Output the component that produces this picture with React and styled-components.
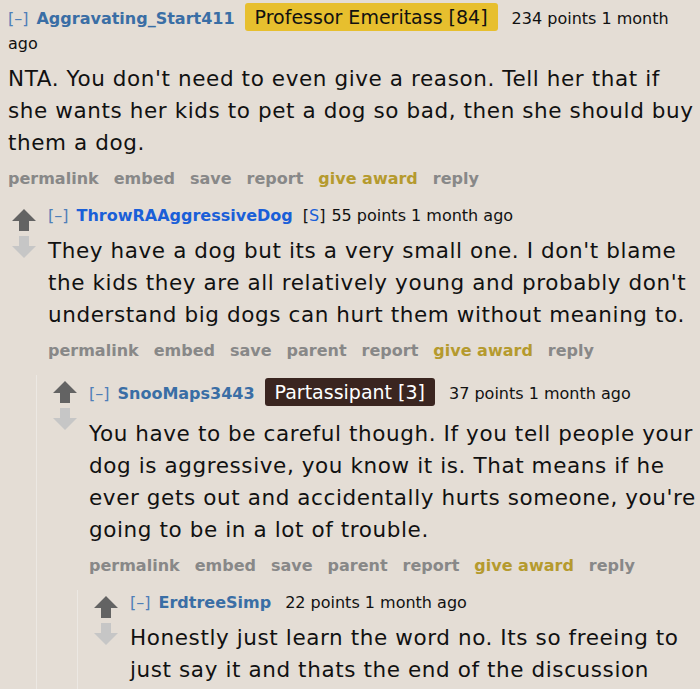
import React from "react";
import styled, { createGlobalStyle } from "styled-components";

const GlobalStyle = createGlobalStyle`
  html, body {
    margin: 0;
    padding: 0;
    background: #e4ddd5;
    overflow: hidden;
  }
`;

const Page = styled.div`
  width: 700px;
  height: 689px;
  overflow: hidden;
  box-sizing: border-box;
  padding: 5px 0 0 8px;
  background: #e4ddd5;
  font-family: "DejaVu Sans", Verdana, sans-serif;
  color: #111;
`;

const Thing = styled.div`
  margin-top: ${(p) => (p.$first ? "0" : "12px")};
`;

const Row = styled.div`
  display: flex;
  align-items: flex-start;
`;

const Midcol = styled.div`
  width: 36px;
  flex: none;
  display: flex;
  flex-direction: column;
  gap: 5px;
  padding-top: 6px;
`;

const Entry = styled.div`
  flex: 1;
  min-width: 0;
`;

const Tagline = styled.div`
  font-size: 16px;
  line-height: 25px;
  color: #111;
  padding: ${(p) => (p.$tall ? "5px 0 5px" : "0")};
`;

const Expand = styled.span`
  color: #4f7fb8;
  margin-right: 8px;
`;

const Author = styled.span`
  font-weight: bold;
  color: ${(p) => (p.$submitter ? "#1a5fd8" : "#3a6ea5")};
`;

const Submitter = styled.span`
  margin-left: 10px;
  margin-right: 6px;
  color: #111;
  b {
    font-weight: normal;
    color: #1a5fd8;
  }
`;

const Flair = styled.span`
  font-size: 19px;
  line-height: 25px;
  padding: 3px 10px;
  margin-left: 10px;
  border-radius: 3px;
  background: ${(p) => (p.$dark ? "#3a2520" : "#e7bf2e")};
  color: ${(p) => (p.$dark ? "#fff" : "#111")};
`;

const Score = styled.span`
  margin-left: ${(p) => (p.$gap ? "14px" : "0")};
`;

const Body = styled.div`
  font-size: 21.5px;
  letter-spacing: 0.6px;
  line-height: 32px;
  margin-top: 7px;
  color: #111;
`;

const Buttons = styled.div`
  display: flex;
  gap: 15px;
  margin-top: 8px;
  font-size: 16px;
  line-height: 24px;
  font-weight: bold;
  color: #888;
`;

const Button = styled.span`
  color: ${(p) => (p.$award ? "#b59a2e" : "#888")};
`;

const Children = styled.div`
  margin-left: ${(p) => (p.$root ? "4px" : "24px")};
  padding-left: ${(p) => (p.$root ? "0" : "16px")};
  border-left: ${(p) => (p.$root ? "none" : "1px solid #ece8e3")};
`;

function Arrow({ down }) {
  return (
    <svg width="24" height="22" viewBox="0 0 24 22">
      <path
        d={down ? "M7 0 H17 V10 H24 L12 22 L0 10 H7 Z" : "M12 0 L24 12 H17 V22 H7 V12 H0 Z"}
        fill={down ? "#c6c6c6" : "#636363"}
      />
    </svg>
  );
}

function Actions({ parent }) {
  const items = parent
    ? ["permalink", "embed", "save", "parent", "report", "give award", "reply"]
    : ["permalink", "embed", "save", "report", "give award", "reply"];
  return (
    <Buttons>
      {items.map((b) => (
        <Button key={b} $award={b === "give award"}>
          {b}
        </Button>
      ))}
    </Buttons>
  );
}

function Comment({ arrows, first, tall, tagline, body, parent, children }) {
  return (
    <Thing $first={first}>
      <Row>
        {arrows && (
          <Midcol>
            <Arrow />
            <Arrow down />
          </Midcol>
        )}
        <Entry>
          <Tagline $tall={tall}>{tagline}</Tagline>
          <Body>{body}</Body>
          {body && <Actions parent={parent} />}
        </Entry>
      </Row>
      {children}
    </Thing>
  );
}

export default function App() {
  return (
    <>
      <GlobalStyle />
      <Page>
        <Comment
          first
          tagline={
            <>
              <Expand>[–]</Expand>
              <Author>Aggravating_Start411</Author>
              <Flair>Professor Emeritass [84]</Flair>
              <Score $gap>234 points 1 month ago</Score>
            </>
          }
          body="NTA. You don't need to even give a reason. Tell her that if she wants her kids to pet a dog so bad, then she should buy them a dog."
        >
          <Children $root>
            <Comment
              arrows
              parent
              tagline={
                <>
                  <Expand>[–]</Expand>
                  <Author $submitter>ThrowRAAggressiveDog</Author>
                  <Submitter>
                    [<b>S</b>]
                  </Submitter>
                  <Score>55 points 1 month ago</Score>
                </>
              }
              body="They have a dog but its a very small one. I don't blame the kids they are all relatively young and probably don't understand big dogs can hurt them without meaning to."
            >
              <Children>
                <Comment
                  arrows
                  parent
                  tall
                  tagline={
                    <>
                      <Expand>[–]</Expand>
                      <Author>SnooMaps3443</Author>
                      <Flair $dark>Partassipant [3]</Flair>
                      <Score $gap>37 points 1 month ago</Score>
                    </>
                  }
                  body="You have to be careful though. If you tell people your dog is aggressive, you know it is. That means if he ever gets out and accidentally hurts someone, you're going to be in a lot of trouble."
                >
                  <Children>
                    <Comment
                      arrows
                      parent
                      tagline={
                        <>
                          <Expand>[–]</Expand>
                          <Author>ErdtreeSimp</Author>
                          <Score $gap>22 points 1 month ago</Score>
                        </>
                      }
                      body="Honestly just learn the word no. Its so freeing to just say it and thats the end of the discussion"
                    />
                  </Children>
                </Comment>
              </Children>
            </Comment>
          </Children>
        </Comment>
      </Page>
    </>
  );
}
